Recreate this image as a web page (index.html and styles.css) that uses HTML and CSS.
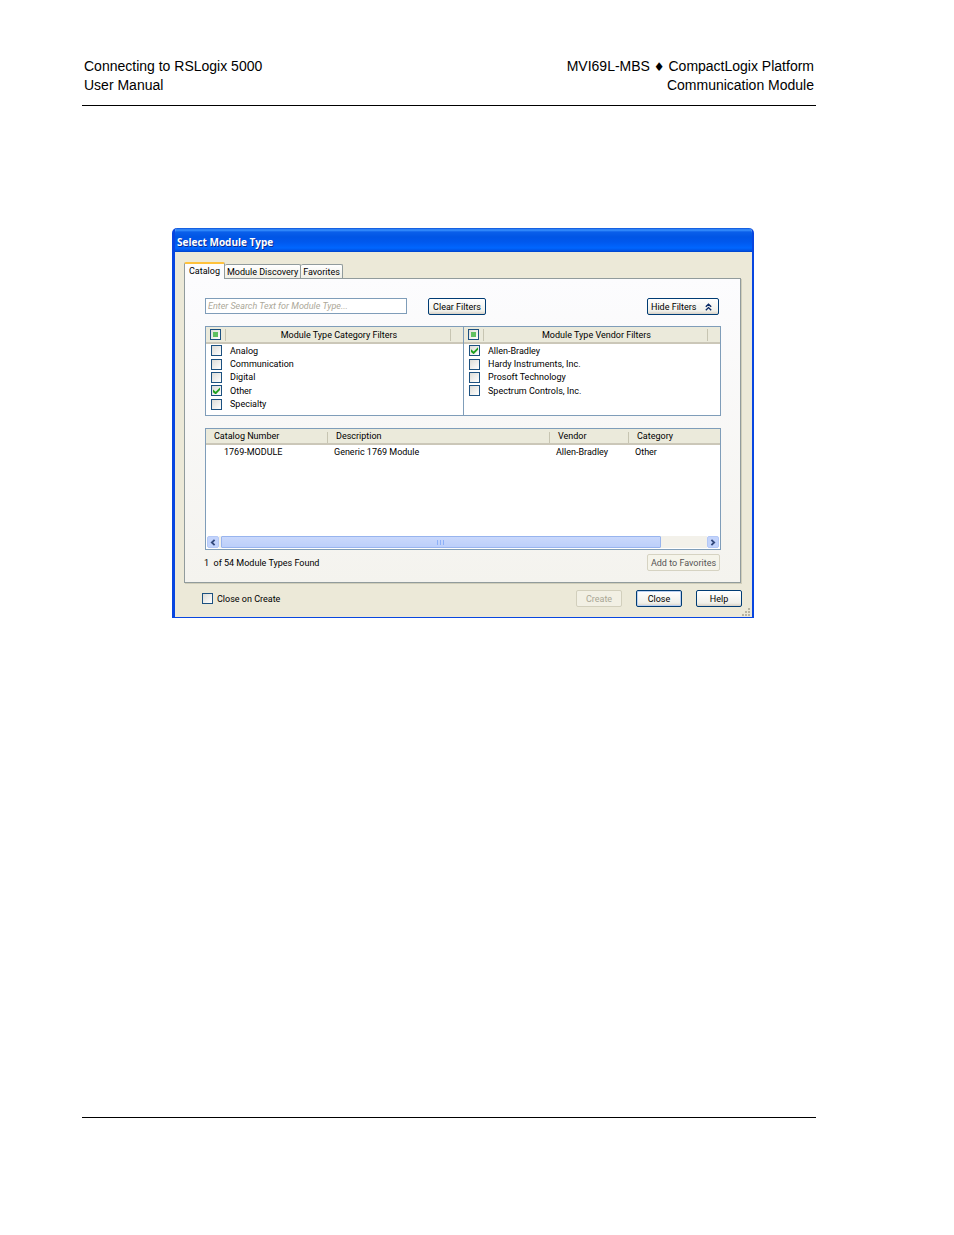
FILE: index.html
```html
<!DOCTYPE html>
<html lang="en">
<head>
<meta charset="utf-8">
<title>Connecting to RSLogix 5000</title>
<link rel="stylesheet" href="styles.css">
</head>
<body>
<div class="page">
  <header class="page-header">
    <div>Connecting to RSLogix 5000<br>User Manual</div>
    <div class="header-right">MVI69L-MBS <span class="diamond">♦</span> CompactLogix Platform<br>Communication Module</div>
  </header>

  <main class="dialog" role="dialog" aria-labelledby="dlg-title">
    <h1 class="titlebar" id="dlg-title">Select Module Type</h1>
    <div class="dialog-body">
      <div class="tabs" role="tablist">
        <button class="tab active" role="tab" aria-selected="true">Catalog</button>
        <button class="tab" role="tab" aria-selected="false">Module Discovery</button>
        <button class="tab" role="tab" aria-selected="false">Favorites</button>
      </div>

      <section class="panel">
        <div class="toolbar">
          <input class="search" type="text" aria-label="Search modules" placeholder="Enter Search Text for Module Type...">
          <button class="btn clear-filters">Clear Filters</button>
          <button class="btn hide-filters">Hide Filters
            <svg width="7" height="8" viewBox="0 0 7 8" aria-hidden="true"><path d="M.8 3.8 3.5 1.2 6.2 3.8M.8 7.2 3.5 4.6 6.2 7.2" fill="none" stroke="#0a2a66" stroke-width="1.4"/></svg>
          </button>
        </div>

        <div class="filters">
          <div class="filter">
            <div class="filter-head">
              <input type="checkbox" class="check mixed" aria-label="All categories">
              <span class="filter-title">Module Type Category Filters</span>
            </div>
            <div class="filter-list">
              <label class="option"><input type="checkbox" class="check">Analog</label>
              <label class="option"><input type="checkbox" class="check">Communication</label>
              <label class="option"><input type="checkbox" class="check">Digital</label>
              <label class="option"><input type="checkbox" class="check" checked>Other</label>
              <label class="option"><input type="checkbox" class="check">Specialty</label>
            </div>
          </div>
          <div class="filter">
            <div class="filter-head">
              <input type="checkbox" class="check mixed" aria-label="All vendors">
              <span class="filter-title">Module Type Vendor Filters</span>
            </div>
            <div class="filter-list">
              <label class="option"><input type="checkbox" class="check" checked>Allen-Bradley</label>
              <label class="option"><input type="checkbox" class="check">Hardy Instruments, Inc.</label>
              <label class="option"><input type="checkbox" class="check">Prosoft Technology</label>
              <label class="option"><input type="checkbox" class="check">Spectrum Controls, Inc.</label>
            </div>
          </div>
        </div>

        <div class="results">
          <table class="modules">
            <thead>
              <tr><th class="col-number">Catalog Number</th><th>Description</th><th class="col-vendor">Vendor</th><th class="col-category">Category</th></tr>
            </thead>
            <tbody>
              <tr><td>1769-MODULE</td><td>Generic 1769 Module</td><td>Allen-Bradley</td><td>Other</td></tr>
            </tbody>
          </table>
          <div class="scrollbar">
            <button class="scroll-btn" aria-label="Scroll left"><svg width="6" height="7" viewBox="0 0 6 7"><path d="M4.6.8 1.8 3.5 4.6 6.2" fill="none" stroke="#33497c" stroke-width="1.8"/></svg></button>
            <div class="track">
              <div class="thumb"><i></i><i></i><i></i></div>
            </div>
            <button class="scroll-btn" aria-label="Scroll right"><svg width="6" height="7" viewBox="0 0 6 7"><path d="M1.4.8 4.2 3.5 1.4 6.2" fill="none" stroke="#33497c" stroke-width="1.8"/></svg></button>
          </div>
        </div>

        <div class="panel-footer">
          <span>1 &nbsp;of 54 Module Types Found</span>
          <button class="btn flat">Add to Favorites</button>
        </div>
      </section>

      <div class="actions">
        <label class="option close-on"><input type="checkbox" class="check">Close on Create</label>
        <button class="btn action" disabled>Create</button>
        <button class="btn action default">Close</button>
        <button class="btn action">Help</button>
      </div>
    </div>
    <svg class="grip" width="9" height="9" viewBox="0 0 9 9" aria-hidden="true"><path d="M6 0h2v2H6zM3 3h2v2H3zM6 3h2v2H6zM0 6h2v2H0zM3 6h2v2H3zM6 6h2v2H6z" fill="#b8b4a2"/></svg>
  </main>

  <footer class="page-footer"></footer>
</div>
</body>
</html>
```
FILE: styles.css
```css
* { box-sizing: border-box; }

body {
  margin: 0;
  background: #fff;
  color: #000;
}

.page {
  display: flex;
  flex-direction: column;
  min-height: 100vh;
  padding: 57px 138px 117px 82px;
}

.page-header {
  display: flex;
  justify-content: space-between;
  padding: 0 2px 10px;
  border-bottom: 1px solid #000;
  font: 14px/19px "Liberation Sans", Arial, sans-serif;
}

.header-right { text-align: right; }

.diamond { font-family: "DejaVu Sans", sans-serif; font-size: 12px; line-height: 1; }

.page-footer {
  margin-top: auto;
  border-top: 1px solid #000;
}

/* Dialog window */
.dialog {
  position: relative;
  margin: 122px 62px 0 90px;
  border: solid #0846e0;
  border-width: 0 2px 1px 3px;
  border-radius: 5px 5px 0 0;
  background: #ece9d8;
  overflow: hidden;
  font: 9px/12px Roboto, "Liberation Sans", sans-serif;
}

.titlebar {
  margin: 0 -2px 0 -3px;
  padding: 2px 5px 0;
  height: 24px;
  background: linear-gradient(#0a50d8 0, #3a93ff 2px, #0a5fea 4px, #0055e5 9px, #0058ee 14px, #0066ff 20px, #0050e0 23px, #003fc4 24px);
  color: #fff;
  font: bold 10px/24px "Open Sans", "Noto Sans", sans-serif;
  text-shadow: 1px 1px 0 #0a2a90;
}

.dialog-body { padding: 10px 11px 10px 9px; }

/* Tabs */
.tabs {
  display: flex;
  align-items: flex-end;
  position: relative;
  margin-bottom: -1px;
}

.tab {
  height: 14px;
  margin-bottom: 1px;
  padding: 0 2px;
  border: 1px solid #919b9c;
  border-left-width: 0;
  border-bottom: 0;
  border-radius: 2px 2px 0 0;
  background: linear-gradient(#fff, #f0efe6);
  color: #000;
  font: inherit;
}

.tab.active {
  height: 17px;
  margin-bottom: 0;
  padding: 0 4px 1px;
  border-left-width: 1px;
  border-top: 2px solid #ffc23c;
  background: #fcfcfe;
}

.panel {
  padding: 19px 19px 11px 20px;
  border: 1px solid #919b9c;
  box-shadow: 1px 1px 0 #d0ceba;
  background: linear-gradient(#fcfcfe, #f4f3ee);
}

/* Controls */
.toolbar { display: flex; align-items: flex-start; }

.search {
  width: 202px;
  height: 16px;
  margin-right: 21px;
  padding: 0 2px;
  border: 1px solid #7f9db9;
  background: #fff;
  font: inherit;
}

.search::placeholder { color: #aca899; font-style: italic; opacity: 1; }

.btn {
  height: 17px;
  padding: 0 4px;
  border: 1px solid #003c74;
  border-radius: 2px;
  background: linear-gradient(#fff, #f0f0ea 80%, #d6d0c5);
  color: #000;
  font: inherit;
  white-space: nowrap;
}

.clear-filters { min-width: 58px; }

.hide-filters {
  display: flex;
  align-items: center;
  justify-content: space-between;
  width: 72px;
  margin: 0 2px 0 auto;
  padding: 0 6px 0 3px;
}

.btn.flat { width: 73px; padding: 0; border-color: #d6d3c2; background: #f5f4ea; color: #555; }

.btn:disabled { border-color: #d2cfbc; background: #f2f0e4; color: #a9a694; }

.check {
  appearance: none;
  flex: none;
  display: grid;
  place-items: center;
  width: 11px;
  height: 11px;
  margin: 0;
  border: 1px solid #1c5180;
  background: linear-gradient(135deg, #dcdcd7, #fff);
}

.check:checked::before {
  content: "";
  width: 7px;
  height: 7px;
  background: #21a121;
  clip-path: polygon(0 30%, 38% 62%, 100% 0, 100% 38%, 38% 100%, 0 68%);
}

.check.mixed::before {
  content: "";
  width: 5px;
  height: 5px;
  background: #5fc060;
}

.option { display: flex; align-items: center; }

/* Filters */
.filters {
  display: grid;
  grid-template-columns: 1fr 1fr;
  margin-top: 11px;
  border: 1px solid #7f9db9;
  background: #fff;
}

.filter + .filter { border-left: 1px solid #7f9db9; }

.filter-head {
  display: flex;
  align-items: center;
  height: 17px;
  padding: 0 12px 0 4px;
  border-bottom: 2px solid #cbc7b8;
  background: #ebeadb;
}

.filter-title {
  flex: 1;
  margin-left: 4px;
  padding-left: 2px;
  border: solid #c7c5b2;
  border-width: 0 1px;
  text-align: center;
}

.filter-list {
  display: grid;
  grid-template-rows: repeat(5, 1fr);
  height: 67px;
  margin: 0 0 4px 5px;
}

.filter-list .option { gap: 8px; }

/* Results */
.results {
  display: flex;
  flex-direction: column;
  justify-content: space-between;
  min-height: 122px;
  margin-top: 12px;
  border: 1px solid #7f9db9;
  background: #fff;
}

.modules {
  width: 100%;
  table-layout: fixed;
  border-collapse: separate;
  border-spacing: 0;
  line-height: 12px;
}

.modules th {
  padding: 1px 0 1px 8px;
  border-bottom: 2px solid #cbc7b8;
  background: linear-gradient(#c7c5b2, #c7c5b2) right 3px / 1px 11px no-repeat #ebeadb;
  font-weight: normal;
  text-align: left;
}

.modules th:last-child { background: #ebeadb; }

.modules td { padding: 1px 0 1px 6px; }
.modules td:first-child { padding-left: 18px; }

.col-number { width: 122px; }
.col-vendor { width: 79px; }
.col-category { width: 91px; }

.scrollbar { display: flex; height: 13px; padding: 0 1px 1px; }

.scroll-btn {
  display: grid;
  place-items: center;
  width: 12px;
  height: 12px;
  padding: 0;
  border: 1px solid #b4c8f6;
  border-radius: 2px;
  background: #c2d3fc;
}

.track { flex: 1; padding: 0 2px; background: #f3f1ea; }

.thumb {
  display: flex;
  align-items: center;
  justify-content: center;
  gap: 1px;
  width: 91%;
  height: 12px;
  border: 1px solid #98b4ee;
  border-radius: 1px;
  background: linear-gradient(#c9d8fc, #bccffa);
}

.thumb i { width: 1px; height: 5px; margin-right: 1px; background: #8cb0f8; }

.panel-footer {
  display: flex;
  align-items: center;
  justify-content: space-between;
  margin: 4px 1px 0 -1px;
}

/* Bottom buttons */
.actions { display: flex; align-items: center; gap: 14px; margin-top: 7px; margin-right: -1px; }

.close-on { gap: 4px; margin-left: 18px; margin-right: auto; }

.action { width: 46px; padding: 0; }

.action.default { box-shadow: inset 0 0 0 1px #bcd0f0; }

.grip { position: absolute; right: 1px; bottom: 0; }
```
